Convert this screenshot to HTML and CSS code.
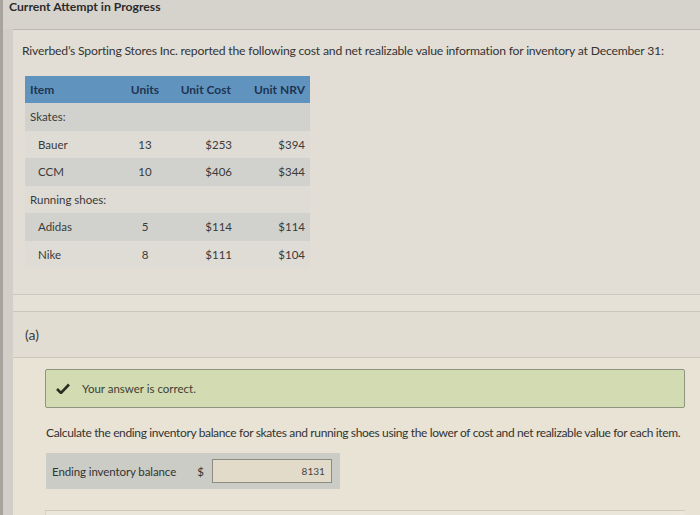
FILE: index.html
```html
<!DOCTYPE html>
<html>
<head>
<meta charset="utf-8">
<link rel="stylesheet" href="styles.css">
</head>
<body>
<div class="topbar">Current Attempt in Progress</div>
<div class="outer">
  <section class="problem">
    <p class="intro">Riverbed’s Sporting Stores Inc. reported the following cost and net realizable value information for inventory at December 31:</p>
    <table class="inv">
      <colgroup><col class="w-item"><col class="w-units"><col class="w-cost"><col class="w-nrv"></colgroup>
      <thead>
        <tr><th class="c-item">Item</th><th class="c-units">Units</th><th class="c-cost">Unit Cost</th><th class="c-nrv">Unit NRV</th></tr>
      </thead>
      <tbody>
        <tr class="odd"><td class="c-item">Skates:</td><td></td><td></td><td></td></tr>
        <tr class="even"><td class="c-item sub">Bauer</td><td class="c-units">13</td><td class="c-cost">$253</td><td class="c-nrv">$394</td></tr>
        <tr class="odd"><td class="c-item sub">CCM</td><td class="c-units">10</td><td class="c-cost">$406</td><td class="c-nrv">$344</td></tr>
        <tr class="even"><td class="c-item">Running shoes:</td><td></td><td></td><td></td></tr>
        <tr class="odd"><td class="c-item sub">Adidas</td><td class="c-units">5</td><td class="c-cost">$114</td><td class="c-nrv">$114</td></tr>
        <tr class="even"><td class="c-item sub">Nike</td><td class="c-units">8</td><td class="c-cost">$111</td><td class="c-nrv">$104</td></tr>
      </tbody>
    </table>
  </section>
  <section class="parthead">(a)</section>
  <section class="partbody">
    <div class="correct">
      <svg class="check" width="14" height="11" viewBox="0 0 14 11"><path d="M1 6 L5 10 L13 1.5" fill="none" stroke="#2a2f22" stroke-width="2.6" stroke-linejoin="miter"/></svg>
      <span>Your answer is correct.</span>
    </div>
    <p class="question">Calculate the ending inventory balance for skates and running shoes using the lower of cost and net realizable value for each item.</p>
    <div class="answer">
      <span class="alabel">Ending inventory balance</span>
      <span class="dollar">$</span>
      <span class="ainput">8131</span>
    </div>
    <div class="nextbox"></div>
  </section>
</div>
</body>
</html>
```
FILE: styles.css
```css
html, body {
  margin: 0;
  padding: 0;
}
body {
  width: 700px;
  height: 515px;
  overflow: hidden;
  background: #d2cfc8;
  font-family: Lato, "Open Sans", sans-serif;
  color: #343434;
  border-left: 3px solid #a8a49d;
  box-sizing: border-box;
}
.topbar {
  height: 29px;
  box-sizing: border-box;
  padding: 0 0 0 6px;
  font-size: 12.2px;
  font-weight: 700;
  line-height: 14px;
  color: #2b2b2b;
  background: #d6d3cc;
}
.outer {
  margin-left: 10px;
  background: #e6e1d6;
  height: 486px;
}
.problem {
  border-top: 1px solid #bdb9b1;
  border-bottom: 1px solid #cdc8be;
  background: #e2ded5;
  height: 266px;
  box-sizing: border-box;
  padding: 13px 0 0 9px;
}
.intro {
  margin: 0;
  font-size: 12.2px;
  line-height: 16px;
  letter-spacing: -0.2px;
  white-space: nowrap;
}
.inv {
  border-collapse: collapse;
  margin: 17px 0 0 3px;
  width: 285px;
  table-layout: fixed;
  font-size: 11.5px;
}
.w-item { width: 100px; }
.w-units { width: 40px; }
.w-cost { width: 75px; }
.w-nrv { width: 70px; }
.inv th {
  background: #6094be;
  color: #1e3452;
  font-weight: 700;
  height: 27px;
  padding: 0;
  font-size: 12px;
}
.inv td {
  height: 27.5px;
  padding: 0;
  color: #3a3a3a;
}
.inv tr.odd td { background: #d1d2cd; }
.inv tr.even td { background: #dedcd4; }
.inv .c-item { text-align: left; padding-left: 5px; }
.inv .sub { padding-left: 13px; }
.inv .c-units { text-align: center; }
.inv .c-cost { text-align: right; padding-right: 8px; }
.inv .c-nrv { text-align: right; padding-right: 5px; }
.inv th.c-units { text-align: right; padding-right: 6px; }
.inv th.c-cost { text-align: right; padding-right: 9px; }
.inv th.c-nrv { text-align: right; padding-right: 5px; }

.parthead {
  margin-top: 16px;
  height: 47px;
  box-sizing: border-box;
  border-top: 1px solid #cbc6bc;
  border-bottom: 1px solid #cbc6bc;
  background: #e2ddd2;
  padding: 14px 0 0 12px;
  font-size: 14px;
  color: #3c3c3c;
}
.partbody {
  background: #e9e3d6;
  padding: 11px 15px 0 32px;
  height: 160px;
  box-sizing: border-box;
}
.correct {
  display: flex;
  align-items: center;
  height: 39px;
  box-sizing: border-box;
  border: 1px solid #8d9680;
  border-radius: 2px;
  background: #d3dbb2;
  padding-left: 10px;
  gap: 12px;
  font-size: 11.5px;
  color: #3d4035;
}
.check { flex: none; }
.question {
  margin: 18px 0 0 1px;
  font-size: 12px;
  line-height: 14px;
  letter-spacing: -0.35px;
  white-space: nowrap;
  color: #333;
}
.answer {
  margin: 13px 0 0 1px;
  width: 294px;
  height: 36px;
  box-sizing: border-box;
  background: #cbccc6;
  display: flex;
  align-items: center;
  padding-left: 6px;
  font-size: 11.5px;
  color: #333;
}
.alabel { letter-spacing: -0.1px; }
.dollar { margin-left: 21px; }
.ainput {
  margin-left: 8px;
  width: 120px;
  height: 24px;
  box-sizing: border-box;
  border: 1px solid #8c8c84;
  background: #e3dbc9;
  text-align: right;
  padding-right: 6px;
  line-height: 22px;
  font-size: 10px;
  color: #444;
}
.nextbox {
  margin-top: 21px;
  height: 20px;
  border-top: 1px solid #cfc9bd;
  border-left: 1px solid #d8d2c6;
  background: #ebe6da;
}
```
